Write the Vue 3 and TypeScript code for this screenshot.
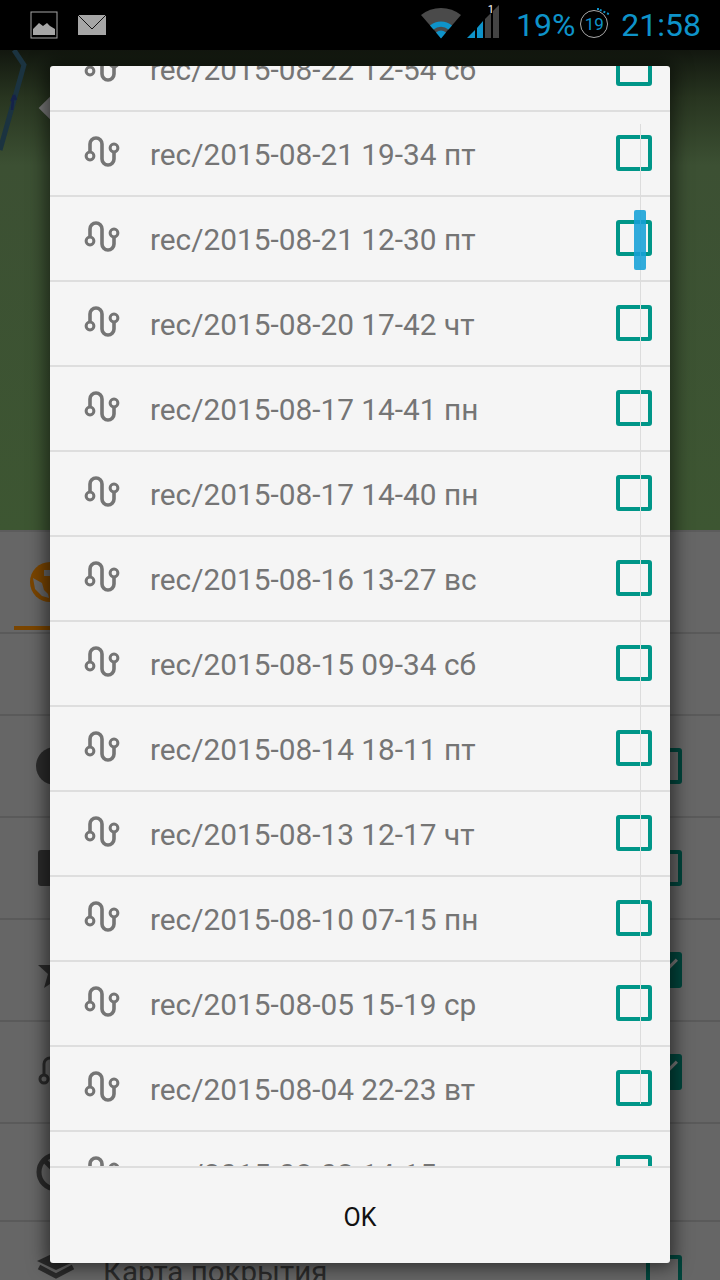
<script setup lang="ts">
const rows: string[] = [
  'rec/2015-08-22 12-54 сб',
  'rec/2015-08-21 19-34 пт',
  'rec/2015-08-21 12-30 пт',
  'rec/2015-08-20 17-42 чт',
  'rec/2015-08-17 14-41 пн',
  'rec/2015-08-17 14-40 пн',
  'rec/2015-08-16 13-27 вс',
  'rec/2015-08-15 09-34 сб',
  'rec/2015-08-14 18-11 пт',
  'rec/2015-08-13 12-17 чт',
  'rec/2015-08-10 07-15 пн',
  'rec/2015-08-05 15-19 ср',
  'rec/2015-08-04 22-23 вт',
  'rec/2015-08-03 14-15 пн',
]
</script>

<template>
  <div class="screen">
    <header class="status">
      <div class="notif">
        <svg width="28" height="28" viewBox="0 0 28 28">
          <rect x="1" y="1" width="26" height="26" fill="none" stroke="#a6a6a6" stroke-width="1" />
          <path d="M3 24V18L9 12L13 15L17 12L20 15L25 18V24Z" fill="#a6a6a6" />
        </svg>
        <svg width="28" height="20" viewBox="0 0 28 20">
          <rect width="28" height="20" fill="#a6a6a6" />
          <path d="M0 0L14 14L28 0" fill="none" stroke="#111" stroke-width="1" />
        </svg>
      </div>
      <div class="sys">
        <svg class="wifi" width="40" height="32" viewBox="0 0 40 32">
          <path d="M0 8A32 32 0 0 1 40 8L20 31Z" fill="#4a4a4a" />
          <path d="M9 18.5A17 17 0 0 1 31 18.5L27.5 22.5A12 12 0 0 0 12.5 22.5Z" fill="#0e93c9" />
          <path d="M15 25.5A8 8 0 0 1 25 25.5L20 31.5Z" fill="#0e93c9" />
        </svg>
        <div class="signal">
          <svg width="32" height="34" viewBox="0 0 32 34">
            <path d="M0 33L8 25V33Z" fill="#0e93c9" />
            <path d="M10 23L16 16V33H10Z" fill="#0e93c9" />
            <path d="M18 14L24 8V33H18Z" fill="#444" />
            <path d="M26 6L32 0V33H26Z" fill="#444" />
          </svg>
          <span class="sim">1</span>
        </div>
        <span class="pct">19%</span>
        <div class="batt">
          <span>19</span>
          <i class="dots"></i>
        </div>
        <span class="clock">21:58</span>
      </div>
    </header>

    <section class="map">
      <svg class="road" width="60" height="130" viewBox="0 0 60 130">
        <path d="M14 0L24 15L0 100" fill="none" stroke="#1b3340" stroke-width="5" />
        <path d="M14 45L12 50L13 50L12 60M14 45L16 50" fill="none" stroke="#15224a" stroke-width="2.5" />
      </svg>
      <span class="pin"></span>
    </section>

    <section class="panel">
      <div class="tabs">
        <div class="tab">
          <svg width="40" height="40" viewBox="0 0 40 40">
            <circle cx="20" cy="20" r="20" fill="#7a4500" />
            <path d="M3 16L12 21L14 28L18 32L19 36L12 34L5 27Z" fill="#666" />
            <path d="M14 8H20V4H26V30H20V14H14Z" fill="#666" />
          </svg>
        </div>
      </div>
      <div class="prow short"></div>
      <div class="prow">
        <span class="dot"></span>
        <span class="box"></span>
      </div>
      <div class="prow">
        <span class="sq"></span>
        <span class="box"></span>
      </div>
      <div class="prow">
        <svg class="pico" width="40" height="40" viewBox="0 0 40 40">
          <path d="M20 2L25 15L38 15L28 24L32 38L20 30L8 38L12 24L2 15L15 15Z" fill="#2b2b2b" />
        </svg>
        <span class="box on"><i class="tick"></i></span>
      </div>
      <div class="prow">
        <svg class="pico" width="40" height="40" viewBox="0 0 40 40">
          <circle cx="8" cy="27" r="4" fill="none" stroke="#2b2b2b" stroke-width="3" />
          <path d="M8 23V12a6 6 0 0 1 12 0" fill="none" stroke="#2b2b2b" stroke-width="3" />
        </svg>
        <span class="box on"><i class="tick"></i></span>
      </div>
      <div class="prow tall">
        <svg class="pico" width="40" height="40" viewBox="0 0 40 40">
          <circle cx="20" cy="20" r="17" fill="none" stroke="#2b2b2b" stroke-width="5" />
          <path d="M8 8L32 32" stroke="#2b2b2b" stroke-width="5" />
        </svg>
      </div>
      <div class="prow last">
        <svg class="pico layers" width="40" height="32" viewBox="0 0 40 32">
          <path d="M20 0L39 9L20 18L1 9Z" fill="#2b2b2b" />
          <path d="M3 15L20 24L37 15" fill="none" stroke="#2b2b2b" stroke-width="5" />
        </svg>
        <span class="ptext">Карта покрытия</span>
        <span class="box"></span>
      </div>
    </section>

    <div class="dialog">
      <div class="viewport">
        <ul class="list">
          <li v-for="r in rows" :key="r" class="row">
            <svg class="track" width="40" height="40" viewBox="0 0 40 40">
              <path d="M8 18.5V11a6 6 0 0 1 12 0V26a6 6 0 0 0 12 0V19.5" fill="none" stroke="#757575" stroke-width="3.6" />
              <circle cx="8" cy="23" r="3.9" fill="none" stroke="#757575" stroke-width="3" />
              <circle cx="32" cy="15" r="3.9" fill="none" stroke="#757575" stroke-width="3" />
            </svg>
            <span class="label">{{ r }}</span>
            <span class="check"></span>
          </li>
        </ul>
        <div class="sb-line"></div>
        <div class="sb-thumb"></div>
      </div>
      <footer class="foot">OK</footer>
    </div>
  </div>
</template>

<style>
html, body { margin: 0; background: #000; }
</style>

<style scoped>
.screen {
  position: relative;
  width: 720px;
  height: 1280px;
  overflow: hidden;
  font-family: Roboto, "Noto Sans", sans-serif;
  display: flex;
  flex-direction: column;
}
.status {
  height: 50px;
  flex: none;
  background: #000;
  display: flex;
  justify-content: space-between;
  align-items: flex-start;
  color: #0e93c9;
}
.notif {
  display: flex;
  align-items: flex-start;
  gap: 20px;
  padding: 11px 0 0 30px;
}
.notif svg:last-child { margin-top: 4px; }
.sys {
  display: flex;
  align-items: flex-start;
  padding-right: 19px;
  height: 50px;
}
.wifi { margin: 7px 0 0 0; }
.signal { position: relative; margin: 5px 0 0 6px; }
.sim {
  position: absolute;
  right: 5px;
  top: -1px;
  color: #fff;
  font-size: 11px;
  line-height: 12px;
}
.pct {
  font-size: 32px;
  line-height: 50px;
  margin-left: 17px;
}
.batt {
  position: relative;
  box-sizing: border-box;
  width: 28px;
  height: 28px;
  margin: 10px 0 0 5px;
  border: 1px solid #aaa;
  border-radius: 50%;
  font-size: 17px;
  line-height: 27px;
  text-align: center;
}
.dots {
  position: absolute;
  right: -1px;
  top: -1px;
  width: 13px;
  height: 7px;
  border-top: 2px dotted #0e93c9;
  transform: rotate(25deg);
}
.clock {
  font-size: 32px;
  line-height: 50px;
  margin-left: 13px;
}
.map {
  position: relative;
  height: 480px;
  flex: none;
  background: linear-gradient(180deg, #12170f 0%, #283520 10%, #3c5033 24%, #3d5632 100%);
}
.road { position: absolute; left: 0; top: 0; }
.pin {
  position: absolute;
  left: 42px;
  top: 50px;
  width: 16px;
  height: 16px;
  background: #777;
  transform: rotate(45deg);
}
.panel {
  flex: 1;
  background: #666;
  border-top: 2px solid #5c5c5c;
  display: flex;
  flex-direction: column;
}
.tabs {
  height: 102px;
  box-sizing: border-box;
  border-bottom: 2px solid #5a5a5a;
  flex: none;
}
.tab {
  width: 80px;
  height: 98px;
  margin-left: 14px;
  box-sizing: border-box;
  padding: 30px 0 0 16px;
  border-bottom: 4px solid #7a4500;
}
.prow {
  height: 102px;
  flex: none;
  box-sizing: border-box;
  border-bottom: 2px solid #5a5a5a;
  display: flex;
  align-items: center;
  padding: 0 38px 0 36px;
}
.short { height: 82px; }
.tall { height: 98px; }
.last { border-bottom: 0; align-items: flex-start; padding-top: 33px; }
.dot { width: 38px; height: 38px; border-radius: 50%; background: #2b2b2b; }
.sq { width: 36px; height: 36px; border-radius: 3px; background: #2b2b2b; margin-left: 2px; }
.box {
  position: relative;
  margin-left: auto;
  width: 36px;
  height: 36px;
  box-sizing: border-box;
  border: 4px solid #00453c;
  border-radius: 3px;
}
.box.on { background: #00453c; }
.tick {
  position: absolute;
  right: 6px;
  top: 1px;
  width: 3px;
  height: 18px;
  background: #777;
  transform: rotate(45deg);
}
.layers { flex: none; margin-top: -3px; }
.ptext {
  margin-left: 27px;
  font-size: 29.5px;
  line-height: 34px;
  color: #2b2b2b;
  white-space: nowrap;
}
.dialog {
  position: absolute;
  left: 50px;
  top: 66px;
  width: 620px;
  height: 1197px;
  background: #f5f5f5;
  border-radius: 3px;
  box-shadow: 0 0 18px 4px rgba(0, 0, 0, 0.55);
  display: flex;
  flex-direction: column;
  overflow: hidden;
}
.viewport {
  position: relative;
  height: 1100px;
  flex: none;
  overflow: hidden;
}
.list {
  list-style: none;
  margin: -39px 0 0;
  padding: 0;
}
.row {
  height: 85px;
  box-sizing: border-box;
  border-bottom: 2px solid #dedede;
  display: flex;
  align-items: center;
  padding: 0 18px 0 32px;
}
.track { flex: none; margin-top: -1px; }
.label {
  margin-left: 28px;
  margin-top: 2px;
  font-size: 29.8px;
  line-height: 34px;
  color: #757575;
  white-space: nowrap;
}
.check {
  margin-left: auto;
  margin-top: -1px;
  width: 36px;
  height: 36px;
  box-sizing: border-box;
  border: 4px solid #009688;
  border-radius: 3px;
}
.sb-line {
  position: absolute;
  left: 590px;
  top: 58px;
  width: 1px;
  height: 980px;
  background: #dcdcdc;
}
.sb-thumb {
  position: absolute;
  left: 584px;
  top: 144px;
  width: 12px;
  height: 60px;
  border-radius: 2px;
  background: rgba(20, 160, 215, 0.88);
}
.foot {
  flex: 1;
  border-top: 2px solid #dedede;
  display: flex;
  align-items: center;
  justify-content: center;
  padding-top: 3px;
  font-size: 25px;
  color: #111;
}
</style>
